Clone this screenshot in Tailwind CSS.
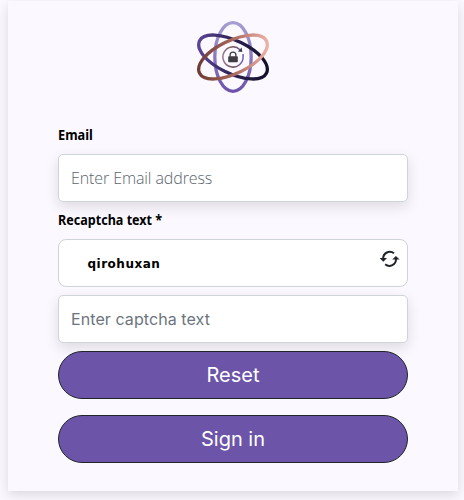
<!DOCTYPE html>
<html lang="en">
<head>
<meta charset="utf-8">
<title>Sign in</title>
<script src="https://cdn.jsdelivr.net/npm/@tailwindcss/browser@4"></script>
</head>
<body class="h-[500px] overflow-hidden bg-[#fbf9ff] pt-px font-['Inter',sans-serif]">
<main class="ml-2 flex h-[490px] w-[450px] flex-col bg-[#fbf9ff] px-[50px] pt-[19px] shadow-[0_4px_12px_rgba(0,0,0,0.13)]">
  <svg class="mx-auto h-[74px] w-[74px] shrink-0" viewBox="-37 -37 74 74" fill="none">
    <defs>
      <linearGradient id="v" x1="0" y1="-36" x2="0" y2="36" gradientUnits="userSpaceOnUse"><stop stop-color="#a79fd3"/><stop offset="1" stop-color="#6b51ab"/></linearGradient>
      <linearGradient id="d" x1="-34" y1="0" x2="34" y2="0" gradientUnits="userSpaceOnUse"><stop stop-color="#5b4496"/><stop offset=".5" stop-color="#2c2152"/><stop offset="1" stop-color="#14112a"/></linearGradient>
      <linearGradient id="r" x1="-34" y1="0" x2="34" y2="0" gradientUnits="userSpaceOnUse"><stop stop-color="#703c36"/><stop offset=".5" stop-color="#a8675d"/><stop offset="1" stop-color="#eeb0a6"/></linearGradient>
      <linearGradient id="c" x1="-10" y1="0" x2="10" y2="0" gradientUnits="userSpaceOnUse"><stop stop-color="#9b7588"/><stop offset=".5" stop-color="#704f50"/><stop offset="1" stop-color="#7460b4"/></linearGradient>
    </defs>
    <ellipse rx="18.2" ry="34.3" stroke="url(#v)" stroke-width="3.3"/>
    <path d="M-33.4-16.3C-29.3-24.6-11.2-23.7 7.9-14.4S37.6 8 33.4 16.3S11.2 23.7-7.9 14.4S-37.5-8-33.4-16.3Z" stroke="url(#d)" stroke-width="3.3"/>
    <path d="M33.4-16.3C29.3-24.6 11.2-23.7-7.9-14.4S-37.6 8-33.4 16.3S-11.2 23.7 7.9 14.4S37.5-8 33.4-16.3Z" stroke="url(#r)" stroke-width="3.3"/>
    <path d="M7-7.3A10.1 10.1 0 1 0 10.1-.5V-3" stroke="url(#c)" stroke-width="1.5"/>
    <path d="M8.7-9.5L9.3-4.9L4.8-5.4Z" fill="#3b3a50"/>
    <path d="M-2.9-.2V-1.9a2.9 2.9 0 0 1 5.8 0v1.7" stroke="#3d3d42" stroke-width="1.3"/>
    <rect x="-4.8" y="-.7" width="9.6" height="5.9" rx=".8" fill="#3d3d42"/>
  </svg>
  <label for="email" class="mt-[31px] h-[29px] origin-left scale-x-[.91] font-['Noto_Sans',sans-serif] text-[14px] leading-5 font-bold text-black">Email</label>
  <input id="email" placeholder="Enter Email address" class="h-12 w-full shrink-0 rounded-[5px] border border-[#ced4da] bg-white px-3 font-['Open_Sans',sans-serif] text-[16px] font-light tracking-[-.1px] shadow-[0_5px_14px_rgba(0,0,0,0.12)] outline-none placeholder:text-[#5c656d]">
  <label for="captcha" class="mt-2 h-[29px] origin-left scale-x-[.898] font-['Noto_Sans',sans-serif] text-[14px] leading-5 font-bold text-black">Recaptcha text *</label>
  <div class="flex h-12 shrink-0 justify-between rounded-lg border border-[#ced4da] bg-white pr-[7.5px] pl-[28.5px]">
    <span class="pt-[14px] font-['DejaVu_Sans',sans-serif] text-[12px] leading-5 font-bold tracking-[.5px] text-black">qirohuxan</span>
    <svg class="mt-[9px] h-5 w-5" viewBox="0 0 20 20" fill="none">
      <path d="M14 4.3A6.6 6.6 0 0 0 3.2 9.7M5.2 15.3A6.6 6.6 0 0 0 16 9.9" stroke="#212529" stroke-width="2"/>
      <path d="M-.4 9.1H7L3.3 12.7ZM19.6 10.5H12.2L15.9 6.9Z" fill="#212529"/>
    </svg>
  </div>
  <input id="captcha" placeholder="Enter captcha text" class="mt-2 h-12 w-full shrink-0 rounded-[5px] border border-[#ced4da] bg-white px-3 text-[16px] tracking-[.08px] shadow-[0_5px_14px_rgba(0,0,0,0.12)] outline-none placeholder:text-[#6c757d]">
  <button class="relative mt-2 h-12 shrink-0 rounded-full border border-[#212529] bg-[#6c55a9] text-[20px] text-white">Reset</button>
  <button class="relative mt-4 h-12 shrink-0 rounded-full border border-[#212529] bg-[#6c55a9] text-[20px] text-white">Sign in</button>
</main>
</body>
</html>
